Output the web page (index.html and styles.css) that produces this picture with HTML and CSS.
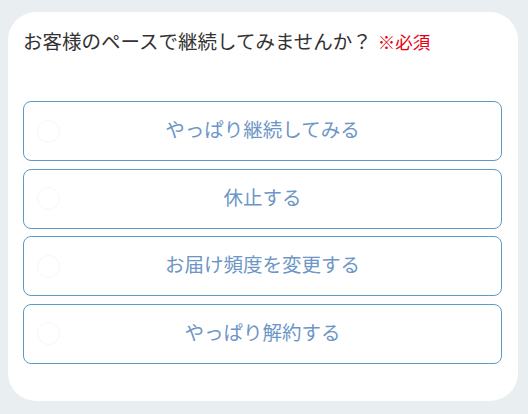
FILE: index.html
```html
<!DOCTYPE html>
<html lang="ja">
<head>
  <meta charset="utf-8">
  <title>継続のご案内</title>
  <link rel="stylesheet" href="styles.css">
</head>
<body>
  <div class="page">
    <div class="question-card">
      <p class="question-title">お客様のペースで継続してみませんか？<span class="required">※必須</span></p>
      <div class="choice-list">
        <label class="choice-button">
          <span class="choice-radio"></span>
          <span class="choice-label">やっぱり継続してみる</span>
        </label>
        <label class="choice-button">
          <span class="choice-radio"></span>
          <span class="choice-label">休止する</span>
        </label>
        <label class="choice-button">
          <span class="choice-radio"></span>
          <span class="choice-label">お届け頻度を変更する</span>
        </label>
        <label class="choice-button">
          <span class="choice-radio"></span>
          <span class="choice-label">やっぱり解約する</span>
        </label>
      </div>
    </div>
  </div>
</body>
</html>
```

FILE: styles.css
```css
body {
  margin: 0;
  padding: 0;
  background-color: #e9eef1;
  font-family: "Noto Sans CJK JP", "Noto Sans", sans-serif;
}

.page {
  padding: 12px 10px 14px 8px;
}

.question-card {
  background-color: #fff;
  border-radius: 28px;
  padding: 14px 16px 37px 15px;
}

.question-title {
  margin: 0;
  font-size: 19.5px;
  line-height: 29px;
  color: #333;
}

.required {
  margin-left: 6px;
  font-size: 17.5px;
  color: #e60012;
}

.choice-list {
  display: flex;
  flex-direction: column;
  gap: 7.5px;
  margin-top: 45px;
}

.choice-button {
  display: grid;
  grid-template-columns: 24px 1fr 24px;
  align-items: center;
  height: 60px;
  box-sizing: border-box;
  padding: 0 13px;
  border: 1px solid #5b9bc5;
  border-radius: 8px;
  cursor: pointer;
}

.choice-radio {
  width: 23px;
  height: 23px;
  box-sizing: border-box;
  border: 1px solid #f6f7f8;
  border-radius: 50%;
}

.choice-label {
  padding-bottom: 5px;
  text-align: center;
  font-size: 19.5px;
  color: #6d96c6;
}
```
